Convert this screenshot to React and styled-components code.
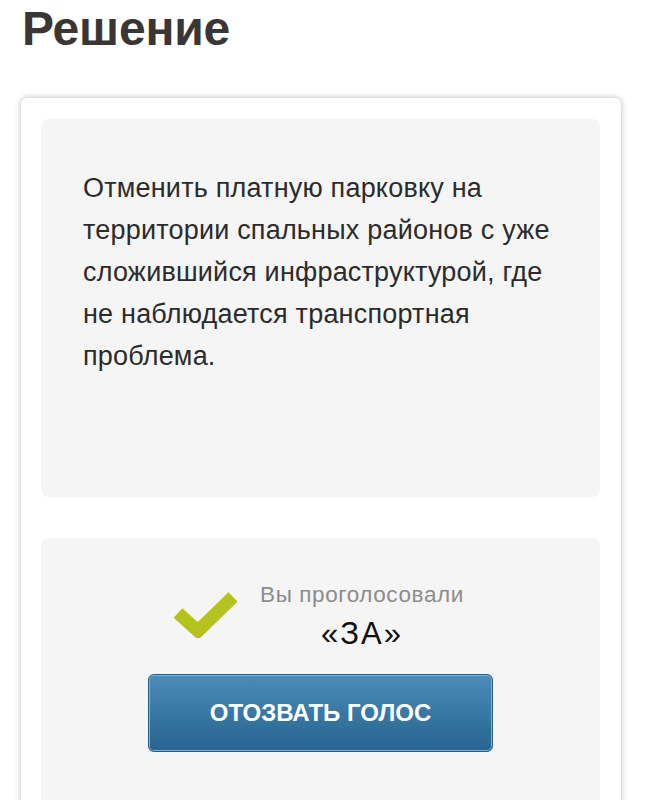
import React from "react";
import styled, { createGlobalStyle } from "styled-components";

const GlobalStyle = createGlobalStyle`
  html, body {
    margin: 0;
    padding: 0;
    background: #ffffff;
    font-family: "Liberation Sans", Arial, sans-serif;
  }
`;

const Page = styled.div`
  width: 646px;
  padding-bottom: 40px;
`;

const Title = styled.h1`
  margin: 0;
  padding: 2px 0 0 22px;
  font-size: 48px;
  line-height: 54px;
  font-weight: 700;
  color: #3a3634;
  letter-spacing: -0.2px;
`;

const Card = styled.div`
  margin: 42px 25px 0 21px;
  padding: 21px 21px 0 20px;
  background: #ffffff;
  border-radius: 6px;
  box-shadow: 0 0 6px rgba(0, 0, 0, 0.28);
  display: flex;
  flex-direction: column;
  gap: 41px;
`;

const Panel = styled.div`
  background: #f5f5f5;
  border-radius: 8px;
  padding: ${(p) => p.$pad};
  height: ${(p) => p.$height};
  box-sizing: border-box;
`;

const Proposal = styled.p`
  margin: 0;
  font-size: 27px;
  line-height: 42px;
  letter-spacing: 0.2px;
  color: #2b2b2b;
`;

const VoteRow = styled.div`
  display: flex;
  align-items: flex-start;
  justify-content: center;
  gap: 23px;
  padding-right: 4px;
`;

const Check = styled.svg`
  width: 64px;
  height: 52px;
  margin-top: 3px;
  flex: none;
`;

const VoteText = styled.div`
  display: flex;
  flex-direction: column;
  align-items: center;
`;

const Voted = styled.div`
  font-size: 22.5px;
  line-height: 24px;
  letter-spacing: 0.6px;
  color: #8c8c8c;
`;

const Choice = styled.div`
  font-size: 31px;
  line-height: 34px;
  letter-spacing: 2px;
  color: #111111;
  margin-top: 10px;
`;

const RevokeButton = styled.button`
  display: block;
  margin: 23px auto 0;
  width: 345px;
  height: 78px;
  border: 1px solid #245d88;
  border-radius: 6px;
  background: linear-gradient(#4b8cb9, #27648f);
  box-shadow: inset 0 0 0 1px #7fb1d3;
  color: #ffffff;
  font-family: "Liberation Sans", Arial, sans-serif;
  font-size: 24px;
  font-weight: 700;
  text-transform: uppercase;
  cursor: pointer;
`;

const App = () => {
  return (
    <Page>
      <GlobalStyle />
      <Title>Решение</Title>
      <Card>
        <Panel $pad="48px 30px 0 42px" $height="378px">
          <Proposal>
            Отменить платную парковку на территории спальных районов с уже
            сложившийся инфраструктурой, где не наблюдается транспортная
            проблема.
          </Proposal>
        </Panel>
        <Panel $pad="45px 0 0 0" $height="300px">
          <VoteRow>
            <Check viewBox="0 0 64 52">
              <polyline
                points="5,27 25,45 60,11"
                fill="none"
                stroke="#b5c31f"
                strokeWidth="13"
                strokeLinejoin="miter"
              />
            </Check>
            <VoteText>
              <Voted>Вы проголосовали</Voted>
              <Choice>«ЗА»</Choice>
            </VoteText>
          </VoteRow>
          <RevokeButton type="button">Отозвать голос</RevokeButton>
        </Panel>
      </Card>
    </Page>
  );
};

export default App;
